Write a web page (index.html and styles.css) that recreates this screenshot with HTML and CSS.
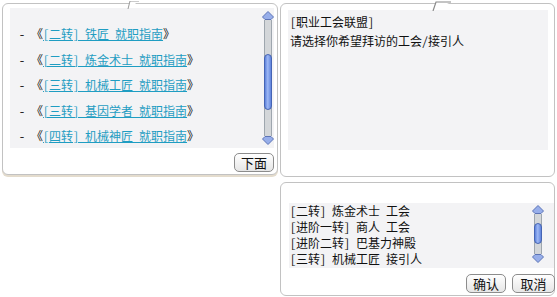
FILE: index.html
```html
<!DOCTYPE html>
<html lang="zh-CN">
<head>
  <meta charset="UTF-8">
  <title>职业工会联盟</title>
  <link rel="stylesheet" href="styles.css">
</head>
<body>

<div class="screen">

  <!-- guide list -->
  <div class="panel guide-panel">
    <svg class="tail tail-left" width="14" height="8" viewBox="0 0 14 8">
      <path d="M2 8 L4 0 L13 0" fill="#fff" stroke="#9a9a9a" stroke-width="1"/>
    </svg>
    <div class="pane">
      <ul class="guide-list">
        <li>- 《<a href="#">[二转] 铁匠 就职指南</a>》</li>
        <li>- 《<a href="#">[二转] 炼金术士 就职指南</a>》</li>
        <li>- 《<a href="#">[三转] 机械工匠 就职指南</a>》</li>
        <li>- 《<a href="#">[三转] 基因学者 就职指南</a>》</li>
        <li>- 《<a href="#">[四转] 机械神匠 就职指南</a>》</li>
      </ul>
      <div class="scroll big">
        <svg class="arrow" width="12" height="9" viewBox="0 0 12 9"><path d="M6 0.5 L11.5 6 L9 8.5 L3 8.5 L0.5 6 Z" fill="#97aeea" stroke="#5d74b6"/></svg>
        <div class="track"><div class="thumb"></div></div>
        <svg class="arrow" width="12" height="9" viewBox="0 0 12 9"><path d="M6 8.5 L11.5 3 L9 0.5 L3 0.5 L0.5 3 Z" fill="#97aeea" stroke="#5d74b6"/></svg>
      </div>
    </div>
    <div class="btn-row">
      <button class="btn">下面</button>
    </div>
  </div>

  <div class="side">
    <!-- npc talk -->
    <div class="panel talk-panel">
      <svg class="tail tail-right" width="22" height="10" viewBox="0 0 22 10">
        <path d="M2 10 L5 1 L20 1" fill="#fff" stroke="#8a8a8a" stroke-width="1.2"/>
      </svg>
      <div class="pane talk">
        <p>[职业工会联盟]</p>
        <p>请选择你希望拜访的工会/接引人</p>
      </div>
    </div>

    <!-- choices -->
    <div class="panel choice-panel">
      <div class="pane choices">
        <ul class="choice-list">
          <li>[二转] 炼金术士 工会</li>
          <li>[进阶一转] 商人 工会</li>
          <li>[进阶二转] 巴基力神殿</li>
          <li>[三转] 机械工匠 接引人</li>
        </ul>
        <div class="scroll small">
          <svg class="arrow" width="12" height="9" viewBox="0 0 12 9"><path d="M6 0.5 L11.5 6 L9 8.5 L3 8.5 L0.5 6 Z" fill="#97aeea" stroke="#5d74b6"/></svg>
          <div class="track"><div class="thumb"></div></div>
          <svg class="arrow" width="12" height="9" viewBox="0 0 12 9"><path d="M6 8.5 L11.5 3 L9 0.5 L3 0.5 L0.5 3 Z" fill="#97aeea" stroke="#5d74b6"/></svg>
        </div>
      </div>
      <div class="btn-row">
        <button class="btn">确认</button>
        <button class="btn wide">取消</button>
      </div>
    </div>
  </div>

</div>

</body>
</html>
```

FILE: styles.css
```css
body {
  margin: 0;
  background: #fff;
  font-family: "Noto Sans Mono CJK SC", "Noto Sans CJK SC", monospace;
  font-size: 12px;
  color: #111;
}

.screen {
  display: flex;
  gap: 2px;
  padding: 3px 2px 0 2px;
  width: 553px;
}

.panel {
  position: relative;
  background: #fff;
  border: 1px solid #c2c2c2;
  border-radius: 6px;
  box-sizing: border-box;
}

.tail { position: absolute; }
.tail-left { top: -3px; left: 123px; }
.tail-right { top: -3px; left: 150px; }

/* left guide panel */
.guide-panel {
  width: 276px;
  height: 172px;
  padding: 4px 3px 0 7px;
  box-shadow: 0 2px 0 0 #e4dccd;
}
.pane {
  background: #f3f3f5;
  display: flex;
}
.guide-panel .pane { height: 140px; }

.guide-list {
  flex: 1;
  list-style: none;
  margin: 0;
  padding: 13px 0 0 9px;
  line-height: 25.5px;
}
.guide-list a {
  color: #1f9dc2;
  text-decoration: underline;
}

/* fake scroll bar */
.scroll {
  display: flex;
  flex-direction: column;
  align-items: center;
  width: 12px;
}
.scroll.big { margin: 3px 0 0 0; height: 134px; }
.scroll.small { margin: 2px 10px 0 0; height: 58px; }
.arrow { display: block; }
.track {
  flex: 1;
  width: 6px;
  background: #d3d6d9;
  border: 1px solid #9ea6ae;
  border-top: none;
  border-bottom: none;
}
.thumb {
  width: 8px;
  margin-left: -1px;
  background: linear-gradient(to right, #5f83dc, #9db7f4 45%, #5f83dc);
  border: 1px solid #4564b4;
  border-radius: 4px;
  box-sizing: border-box;
}
.big .thumb { margin-top: 34px; height: 56px; }
.small .thumb { margin-top: 9px; height: 21px; }

.btn-row {
  display: flex;
  justify-content: flex-end;
  gap: 6px;
}
.guide-panel .btn-row { margin-top: 5px; }

.btn {
  width: 40px;
  height: 19px;
  padding: 0;
  font-family: inherit;
  font-size: 13px;
  line-height: 17px;
  color: #111;
  background: linear-gradient(#fff, #e6e6e6);
  border: 1px solid #8c8c8c;
  border-radius: 5px;
}
.btn.wide { width: 43px; }

/* right side */
.side {
  display: flex;
  flex-direction: column;
  gap: 5px;
  width: 275px;
}
.talk-panel {
  height: 174px;
  padding: 6px 6px 0 7px;
}
.talk {
  display: block;
  height: 140px;
  padding: 2px 0 0 2px;
  box-sizing: border-box;
}
.talk p { margin: 0; line-height: 19px; }

.choice-panel {
  height: 114px;
  padding: 20px 0 0 8px;
}
.choices { height: 65px; }
.choice-list {
  flex: 1;
  list-style: none;
  margin: 0;
  padding: 0 0 0 1px;
  line-height: 16px;
}
.choice-panel .btn-row { margin-top: 6px; margin-right: -1px; }
```
